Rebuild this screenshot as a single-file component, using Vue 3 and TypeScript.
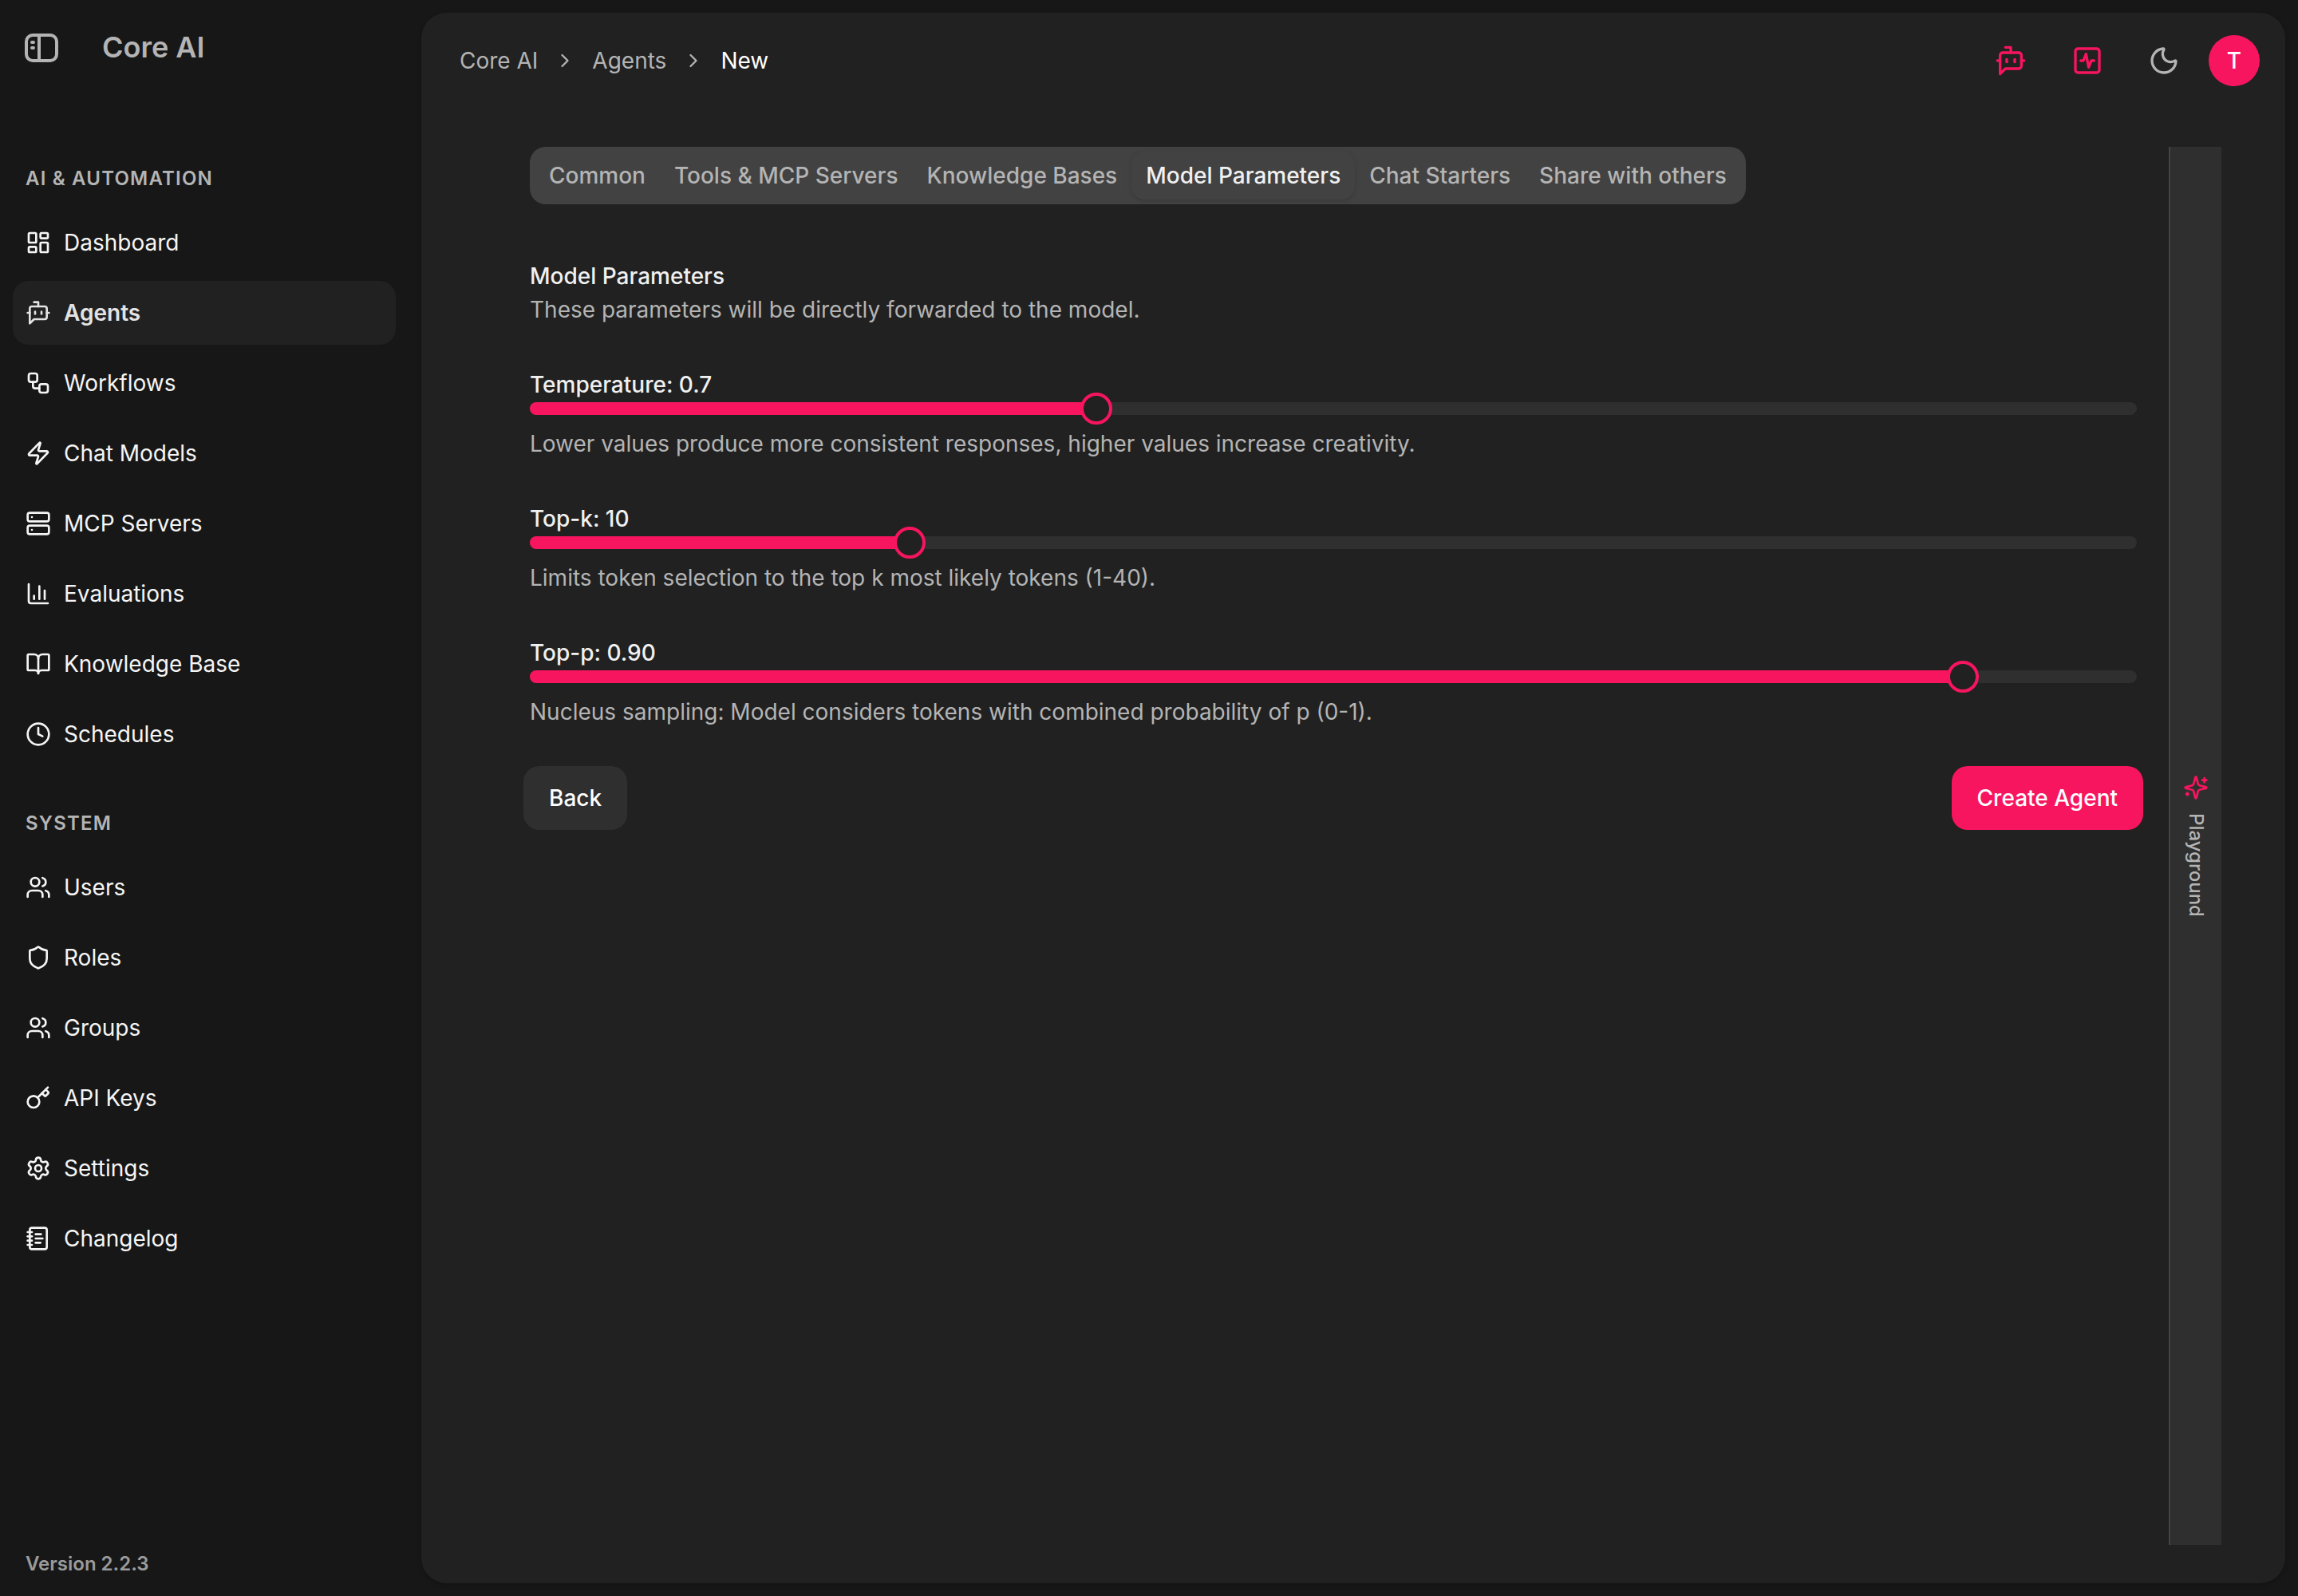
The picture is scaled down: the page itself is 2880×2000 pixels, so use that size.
<script setup lang="ts">
import { ref } from 'vue'

interface NavItem {
  label: string
  icon: string
}
interface NavGroup {
  title: string
  items: NavItem[]
}
interface Param {
  label: string
  help: string
  percent: number
}

// Icon bodies on a 24-unit grid, stroked with the current colour.
const icons: Record<string, string> = {
  dashboard:
    '<rect width="7" height="9" x="3" y="3" rx="1"/><rect width="7" height="5" x="14" y="3" rx="1"/><rect width="7" height="9" x="14" y="12" rx="1"/><rect width="7" height="5" x="3" y="16" rx="1"/>',
  bot: '<path d="M12 6V2H8"/><path d="m8 18-4 4V8a2 2 0 0 1 2-2h12a2 2 0 0 1 2 2v8a2 2 0 0 1-2 2Z"/><path d="M2 12h2"/><path d="M9 11v2"/><path d="M15 11v2"/><path d="M20 12h2"/>',
  workflow:
    '<rect width="8" height="8" x="3" y="3" rx="2"/><path d="M7 11v4a2 2 0 0 0 2 2h4"/><rect width="8" height="8" x="13" y="13" rx="2"/>',
  zap: '<path d="M4 14a1 1 0 0 1-.78-1.63l9.9-10.2a.5.5 0 0 1 .86.46l-1.92 6.02A1 1 0 0 0 13 10h7a1 1 0 0 1 .78 1.63l-9.9 10.2a.5.5 0 0 1-.86-.46l1.92-6.02A1 1 0 0 0 11 14z"/>',
  server:
    '<rect width="20" height="8" x="2" y="2" rx="2"/><rect width="20" height="8" x="2" y="14" rx="2"/><path d="M6 6h.01"/><path d="M6 18h.01"/>',
  chart: '<path d="M3 3v16a2 2 0 0 0 2 2h16"/><path d="M18 17V9"/><path d="M13 17V5"/><path d="M8 17v-3"/>',
  book: '<path d="M12 7v14"/><path d="M3 18a1 1 0 0 1-1-1V4a1 1 0 0 1 1-1h5a4 4 0 0 1 4 4 4 4 0 0 1 4-4h5a1 1 0 0 1 1 1v13a1 1 0 0 1-1 1h-6a3 3 0 0 0-3 3 3 3 0 0 0-3-3z"/>',
  clock: '<circle cx="12" cy="12" r="10"/><path d="M12 6v6l4 2"/>',
  users:
    '<path d="M16 21v-2a4 4 0 0 0-4-4H6a4 4 0 0 0-4 4v2"/><circle cx="9" cy="7" r="4"/><path d="M22 21v-2a4 4 0 0 0-3-3.87"/><path d="M16 3.128a4 4 0 0 1 0 7.744"/>',
  shield:
    '<path d="M20 13c0 5-3.5 7.5-7.66 8.95a1 1 0 0 1-.67-.01C7.5 20.5 4 18 4 13V6a1 1 0 0 1 1-1c2 0 4.5-1.2 6.24-2.72a1.17 1.17 0 0 1 1.52 0C14.51 3.81 17 5 19 5a1 1 0 0 1 1 1z"/>',
  key: '<path d="m15.5 7.5 2.3 2.3a1 1 0 0 0 1.4 0l2.1-2.1a1 1 0 0 0 0-1.4L19 4"/><path d="m21 2-9.6 9.6"/><circle cx="7.5" cy="15.5" r="5.5"/>',
  settings:
    '<path d="M9.671 4.136a2.34 2.34 0 0 1 4.659 0 2.34 2.34 0 0 0 3.319 1.915 2.34 2.34 0 0 1 2.33 4.033 2.34 2.34 0 0 0 0 3.831 2.34 2.34 0 0 1-2.33 4.033 2.34 2.34 0 0 0-3.319 1.915 2.34 2.34 0 0 1-4.659 0 2.34 2.34 0 0 0-3.32-1.915 2.34 2.34 0 0 1-2.33-4.033 2.34 2.34 0 0 0 0-3.831A2.34 2.34 0 0 1 6.35 6.051a2.34 2.34 0 0 0 3.319-1.915"/><circle cx="12" cy="12" r="3"/>',
  notebook:
    '<path d="M2 6h4"/><path d="M2 10h4"/><path d="M2 14h4"/><path d="M2 18h4"/><rect width="16" height="20" x="4" y="2" rx="2"/><path d="M9.5 8h5"/><path d="M9.5 12H16"/><path d="M9.5 16H14"/>',
  activity: '<rect width="18" height="18" x="3" y="3" rx="2"/><path d="M17 12h-2l-2 5-2-10-2 5H7"/>',
  moon: '<path d="M20.985 12.486a9 9 0 1 1-9.473-9.472c.405-.022.617.46.402.803a6 6 0 0 0 8.268 8.268c.344-.215.825-.004.803.401"/>',
  chevron: '<path d="m9 18 6-6-6-6"/>',
  sparkles:
    '<path d="M9.937 15.5A2 2 0 0 0 8.5 14.063l-6.135-1.582a.5.5 0 0 1 0-.962L8.5 9.936A2 2 0 0 0 9.937 8.5l1.582-6.135a.5.5 0 0 1 .963 0L14.063 8.5A2 2 0 0 0 15.5 9.937l6.135 1.581a.5.5 0 0 1 0 .964L15.5 14.063a2 2 0 0 0-1.437 1.437l-1.582 6.135a.5.5 0 0 1-.963 0z"/><path d="M20 3v4"/><path d="M22 5h-4"/><path d="M4 17v2"/><path d="M5 18H3"/>',
}

const groups: NavGroup[] = [
  {
    title: 'AI & AUTOMATION',
    items: [
      { label: 'Dashboard', icon: 'dashboard' },
      { label: 'Agents', icon: 'bot' },
      { label: 'Workflows', icon: 'workflow' },
      { label: 'Chat Models', icon: 'zap' },
      { label: 'MCP Servers', icon: 'server' },
      { label: 'Evaluations', icon: 'chart' },
      { label: 'Knowledge Base', icon: 'book' },
      { label: 'Schedules', icon: 'clock' },
    ],
  },
  {
    title: 'SYSTEM',
    items: [
      { label: 'Users', icon: 'users' },
      { label: 'Roles', icon: 'shield' },
      { label: 'Groups', icon: 'users' },
      { label: 'API Keys', icon: 'key' },
      { label: 'Settings', icon: 'settings' },
      { label: 'Changelog', icon: 'notebook' },
    ],
  },
]

const tabs = ['Common', 'Tools & MCP Servers', 'Knowledge Bases', 'Model Parameters', 'Chat Starters', 'Share with others']
const activeTab = ref('Model Parameters')
const activeNav = ref('Agents')

const params: Param[] = [
  {
    label: 'Temperature: 0.7',
    help: 'Lower values produce more consistent responses, higher values increase creativity.',
    percent: 35,
  },
  {
    label: 'Top-k: 10',
    help: 'Limits token selection to the top k most likely tokens (1-40).',
    percent: (9 / 39) * 100,
  },
  {
    label: 'Top-p: 0.90',
    help: 'Nucleus sampling: Model considers tokens with combined probability of p (0-1).',
    percent: 90,
  },
]

// Keeps the 40px thumb inside the track at both ends, snapped to a 2px grid.
const thumbLeft = (p: number): string => `round(nearest, ${p}% - ${(p * 40) / 100}px, 2px)`
</script>

<template>
  <div class="app">
    <aside class="sidebar">
      <div class="brand">
        <svg class="toggle" viewBox="0 0 42 36" fill="none" stroke="currentColor" stroke-width="4" stroke-linecap="round">
          <rect x="2" y="2" width="38" height="32" rx="8" />
          <path d="M18 2v32" stroke-linecap="butt" />
          <path d="M9 11h2M9 18h2" />
        </svg>
        <span class="brand-name">Core AI</span>
      </div>
      <nav class="nav">
        <section v-for="g in groups" :key="g.title" class="group">
          <h2 class="group-title">{{ g.title }}</h2>
          <ul class="list">
            <li
              v-for="item in g.items"
              :key="item.label"
              class="item"
              :class="{ active: item.label === activeNav }"
              @click="activeNav = item.label"
            >
              <svg class="icon" viewBox="0 0 24 24" v-html="icons[item.icon]" />
              <span>{{ item.label }}</span>
            </li>
          </ul>
        </section>
      </nav>
      <div class="version">Version 2.2.3</div>
    </aside>

    <main class="panel">
      <header class="header">
        <div class="crumbs">
          <span>Core AI</span>
          <svg class="icon chevron" viewBox="0 0 24 24" v-html="icons.chevron" />
          <span>Agents</span>
          <svg class="icon chevron" viewBox="0 0 24 24" v-html="icons.chevron" />
          <span class="current">New</span>
        </div>
        <div class="actions">
          <button class="icon-btn accent"><svg class="icon" viewBox="0 0 24 24" v-html="icons.bot" /></button>
          <button class="icon-btn accent"><svg class="icon" viewBox="0 0 24 24" v-html="icons.activity" /></button>
          <button class="icon-btn"><svg class="icon" viewBox="0 0 24 24" v-html="icons.moon" /></button>
          <div class="avatar">T</div>
        </div>
      </header>

      <div class="body">
        <div class="content">
          <div class="tabs">
            <button
              v-for="t in tabs"
              :key="t"
              class="tab"
              :class="{ selected: t === activeTab }"
              @click="activeTab = t"
            >{{ t }}</button>
          </div>

          <div class="form">
            <div class="intro">
              <div class="label">Model Parameters</div>
              <p class="help">These parameters will be directly forwarded to the model.</p>
            </div>
            <div v-for="p in params" :key="p.label" class="field">
              <div class="label">{{ p.label }}</div>
              <div class="slider">
                <div class="range" :style="{ width: p.percent + '%' }"></div>
                <div class="thumb" :style="{ left: thumbLeft(p.percent) }"></div>
              </div>
              <p class="help">{{ p.help }}</p>
            </div>
          </div>

          <div class="footer">
            <button class="btn">Back</button>
            <button class="btn primary">Create Agent</button>
          </div>
        </div>

        <div class="rail">
          <svg class="icon" viewBox="0 0 24 24" v-html="icons.sparkles" />
          <span class="rail-text">Playground</span>
        </div>
      </div>
    </main>
  </div>
</template>

<style>
body {
  background: #171717;
}
</style>

<style scoped>
.app {
  display: flex;
  width: 2880px;
  height: 2000px;
  box-sizing: border-box;
  padding: 16px 16px 16px 0;
  background: #171717;
  color: #f5f5f5;
  font-family: Inter, 'Liberation Sans', sans-serif;
  font-size: 28px;
  line-height: 40px;
}
button {
  border: 0;
  margin: 0;
  padding: 0;
  background: none;
  color: inherit;
  font: inherit;
}
.icon {
  width: 32px;
  height: 32px;
  flex: none;
  fill: none;
  stroke: currentColor;
  stroke-width: 2;
  stroke-linecap: round;
  stroke-linejoin: round;
}

.sidebar {
  display: flex;
  flex-direction: column;
  width: 528px;
  flex: none;
}
.brand {
  display: flex;
  align-items: center;
  gap: 55px;
  height: 88px;
  padding-left: 31px;
  color: #b4b4b4;
}
.toggle {
  width: 42px;
  height: 36px;
}
.brand-name {
  padding-bottom: 3px;
  font-size: 36px;
  font-weight: 600;
}
.nav {
  display: flex;
  flex-direction: column;
  gap: 40px;
  padding: 88px 32px 0 16px;
}
.group-title {
  margin: 0;
  height: 72px;
  line-height: 64px;
  padding-left: 16px;
  font-size: 24px;
  font-weight: 600;
  letter-spacing: 1.2px;
  color: #b4b4b4;
}
.list {
  display: flex;
  flex-direction: column;
  gap: 8px;
  margin: 0;
  padding: 0;
  list-style: none;
}
.item {
  display: flex;
  align-items: center;
  gap: 16px;
  height: 80px;
  padding: 0 16px;
  box-sizing: border-box;
  border-radius: 20px;
}
.item.active {
  background: #212121;
  color: #e3e3e3;
  font-weight: 600;
}
.version {
  margin-top: auto;
  padding: 0 0 4px 32px;
  font-size: 24px;
  font-weight: 600;
  color: #9b9b9b;
}

.panel {
  display: flex;
  flex-direction: column;
  flex: 1;
  min-width: 0;
  border-radius: 32px;
  background: #212121;
  box-shadow: 0 2px 6px rgba(0, 0, 0, 0.1), 0 2px 4px -2px rgba(0, 0, 0, 0.1);
}
.header {
  display: flex;
  align-items: center;
  justify-content: space-between;
  height: 120px;
  padding: 0 32px 0 48px;
}
.crumbs {
  display: flex;
  align-items: center;
  gap: 20px;
  color: #b4b4b4;
}
.chevron {
  width: 28px;
  height: 28px;
}
.current {
  color: #fff;
}
.actions {
  display: flex;
  align-items: center;
  gap: 16px;
  color: #b4b4b4;
}
.icon-btn {
  display: flex;
  align-items: center;
  justify-content: center;
  width: 80px;
  height: 80px;
}
.icon-btn .icon {
  width: 40px;
  height: 40px;
}
.accent {
  color: #f7155f;
}
.avatar {
  width: 64px;
  height: 64px;
  border-radius: 50%;
  background: #f7155f;
  color: #fff;
  font-weight: 500;
  line-height: 64px;
  text-align: center;
}

.body {
  display: flex;
  flex: 1;
  gap: 32px;
  padding: 48px 80px 48px 128px;
}
.content {
  flex: 1;
  min-width: 0;
}
.tabs {
  display: inline-flex;
  height: 72px;
  margin-left: 8px;
  padding: 6px;
  box-sizing: border-box;
  border-radius: 20px;
  background: #424242;
  color: #b4b4b4;
  vertical-align: top;
}
.tab {
  padding: 0 18px;
  border-radius: 16px;
  font-weight: 500;
  white-space: nowrap;
}
.tab.selected {
  color: #f0f0f0;
  box-shadow: 0 2px 6px rgba(0, 0, 0, 0.1), 0 2px 4px -2px rgba(0, 0, 0, 0.1);
  background: #424242;
}
.form {
  display: flex;
  flex-direction: column;
  gap: 60px;
  padding: 76px 8px 0;
}
.intro,
.field {
  display: flex;
  flex-direction: column;
  gap: 8px;
}
.label {
  line-height: 28px;
  font-weight: 500;
  color: #f0f0f0;
}
.help {
  margin: 0;
  color: #b4b4b4;
}
.slider {
  position: relative;
  height: 16px;
  margin-bottom: 8px;
  border-radius: 8px;
  background: #2f2f2f;
}
.range {
  height: 100%;
  border-radius: 8px 0 0 8px;
  background: #f7155f;
}
.thumb {
  position: absolute;
  top: -12px;
  width: 40px;
  height: 40px;
  box-sizing: border-box;
  border: 4px solid #f7155f;
  border-radius: 50%;
  background: #212121;
}
.footer {
  display: flex;
  justify-content: space-between;
  padding-top: 48px;
}
.btn {
  height: 80px;
  padding: 0 32px;
  border-radius: 20px;
  background: #2f2f2f;
  color: #fff;
  font-weight: 500;
}
.btn.primary {
  background: #f7155f;
}

.rail {
  display: flex;
  flex-direction: column;
  align-items: center;
  justify-content: center;
  gap: 16px;
  width: 66px;
  box-sizing: border-box;
  border-left: 2px solid #444;
  background: #2f2f2f;
  color: #b4b4b4;
}
.rail .icon {
  color: #f7155f;
}
.rail-text {
  writing-mode: vertical-rl;
  font-size: 24px;
  font-weight: 500;
  line-height: 32px;
}
</style>
